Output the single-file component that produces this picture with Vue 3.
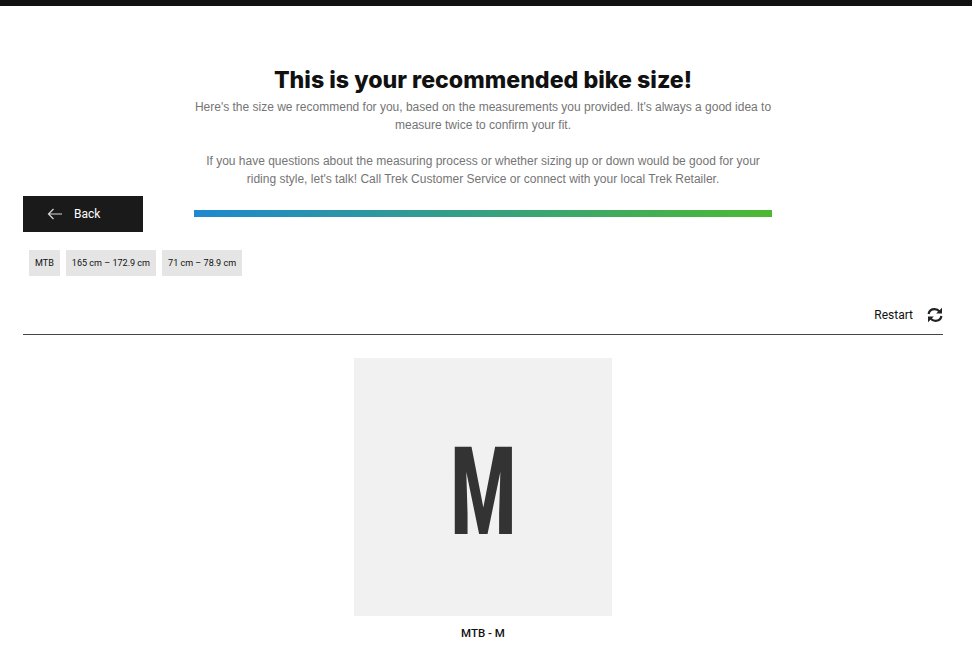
<script setup>
const tags = ['MTB', '165 cm – 172.9 cm', '71 cm – 78.9 cm'];
</script>

<template>
  <div class="topbar"></div>
  <main class="page">
    <section class="head">
      <div class="head-side">
        <button class="back">
          <svg width="16" height="12" viewBox="0 0 16 12" fill="none" stroke="#d8d8d8" stroke-width="1.2">
            <path d="M15 6H1.5M6.5 1 1.5 6l5 5"></path>
          </svg>
          <span>Back</span>
        </button>
      </div>
      <div class="head-main">
        <h1>This is your recommended bike size!</h1>
        <p>Here's the size we recommend for you, based on the measurements you provided. It's always a good idea to measure twice to confirm your fit.</p>
        <p class="second">If you have questions about the measuring process or whether sizing up or down would be good for your riding style, let's talk! Call Trek Customer Service or connect with your local Trek Retailer.</p>
        <div class="progress"></div>
      </div>
      <div class="head-side"></div>
    </section>

    <div class="tags">
      <span v-for="tag in tags" :key="tag" class="tag">{{ tag }}</span>
    </div>

    <div class="restart-row">
      <span>Restart</span>
      <svg width="16" height="16" viewBox="0 0 16 16" fill="none" stroke="#222" stroke-width="2.2">
        <path d="M1.6 7C2.1 4 4.5 2.2 7.6 2.2c2.1 0 3.8.9 5 2.4"></path>
        <path d="M15 .8v5.8H9.2z" fill="#222" stroke="none"></path>
        <path d="M14.4 9c-.5 3-2.9 4.8-6 4.8-2.1 0-3.8-.9-5-2.4"></path>
        <path d="M1 15.2V9.4h5.8z" fill="#222" stroke="none"></path>
      </svg>
    </div>

    <section class="result">
      <div class="size-box"><span class="size-letter">M</span></div>
      <div class="size-name">MTB - M</div>
    </section>
  </main>
</template>

<style>
html, body { background: #fff; }
</style>

<style scoped>
.topbar {
  height: 6px;
  background: #111;
}
.page {
  padding: 0 29px 0 23px;
  font-family: Roboto, sans-serif;
}
.head {
  display: flex;
  align-items: flex-end;
  padding-top: 58px;
}
.head-side {
  flex: 1;
  min-width: 0;
}
.head-main {
  width: 578px;
  padding-bottom: 15px;
  text-align: center;
  font-family: "Liberation Sans", Arial, sans-serif;
}
h1 {
  margin: 0 0 2px;
  font-family: Inter, sans-serif;
  font-weight: 800;
  font-size: 23.2px;
  line-height: 32px;
  color: #111;
}
p {
  margin: 0;
  font-size: 12px;
  line-height: 18px;
  color: #757575;
}
.second {
  margin-top: 18px;
}
.progress {
  height: 7px;
  margin-top: 22px;
  background: linear-gradient(90deg, #1f88d0, #4cb933);
}
.back {
  display: flex;
  align-items: center;
  gap: 11px;
  width: 120px;
  height: 36px;
  padding: 0 0 1px 24px;
  border: 0;
  background: #1a1a1a;
  color: #fff;
  font-family: Roboto, sans-serif;
  font-size: 12px;
  font-weight: 400;
}
.tags {
  display: flex;
  gap: 6px;
  margin: 18px 0 0 6px;
}
.tag {
  height: 26px;
  padding: 0 6px;
  display: flex;
  align-items: center;
  background: #e5e5e5;
  color: #111;
  font-size: 9.05px;
}
.restart-row {
  display: flex;
  justify-content: flex-end;
  align-items: center;
  gap: 14px;
  height: 59px;
  padding-top: 19px;
  box-sizing: border-box;
  border-bottom: 1px solid #444;
  color: #111;
  font-size: 12px;
}
.result {
  display: flex;
  flex-direction: column;
  align-items: center;
  margin-top: 23px;
}
.size-box {
  width: 258px;
  height: 258px;
  box-sizing: border-box;
  padding-top: 12px;
  display: flex;
  align-items: center;
  justify-content: center;
  background: #f1f1f1;
}
.size-letter {
  font-size: 122px;
  font-weight: 900;
  line-height: 1;
  color: #333;
  transform: scaleX(0.61);
}
.size-name {
  margin-top: 10px;
  font-size: 11.5px;
  font-weight: 500;
  color: #111;
}
</style>
